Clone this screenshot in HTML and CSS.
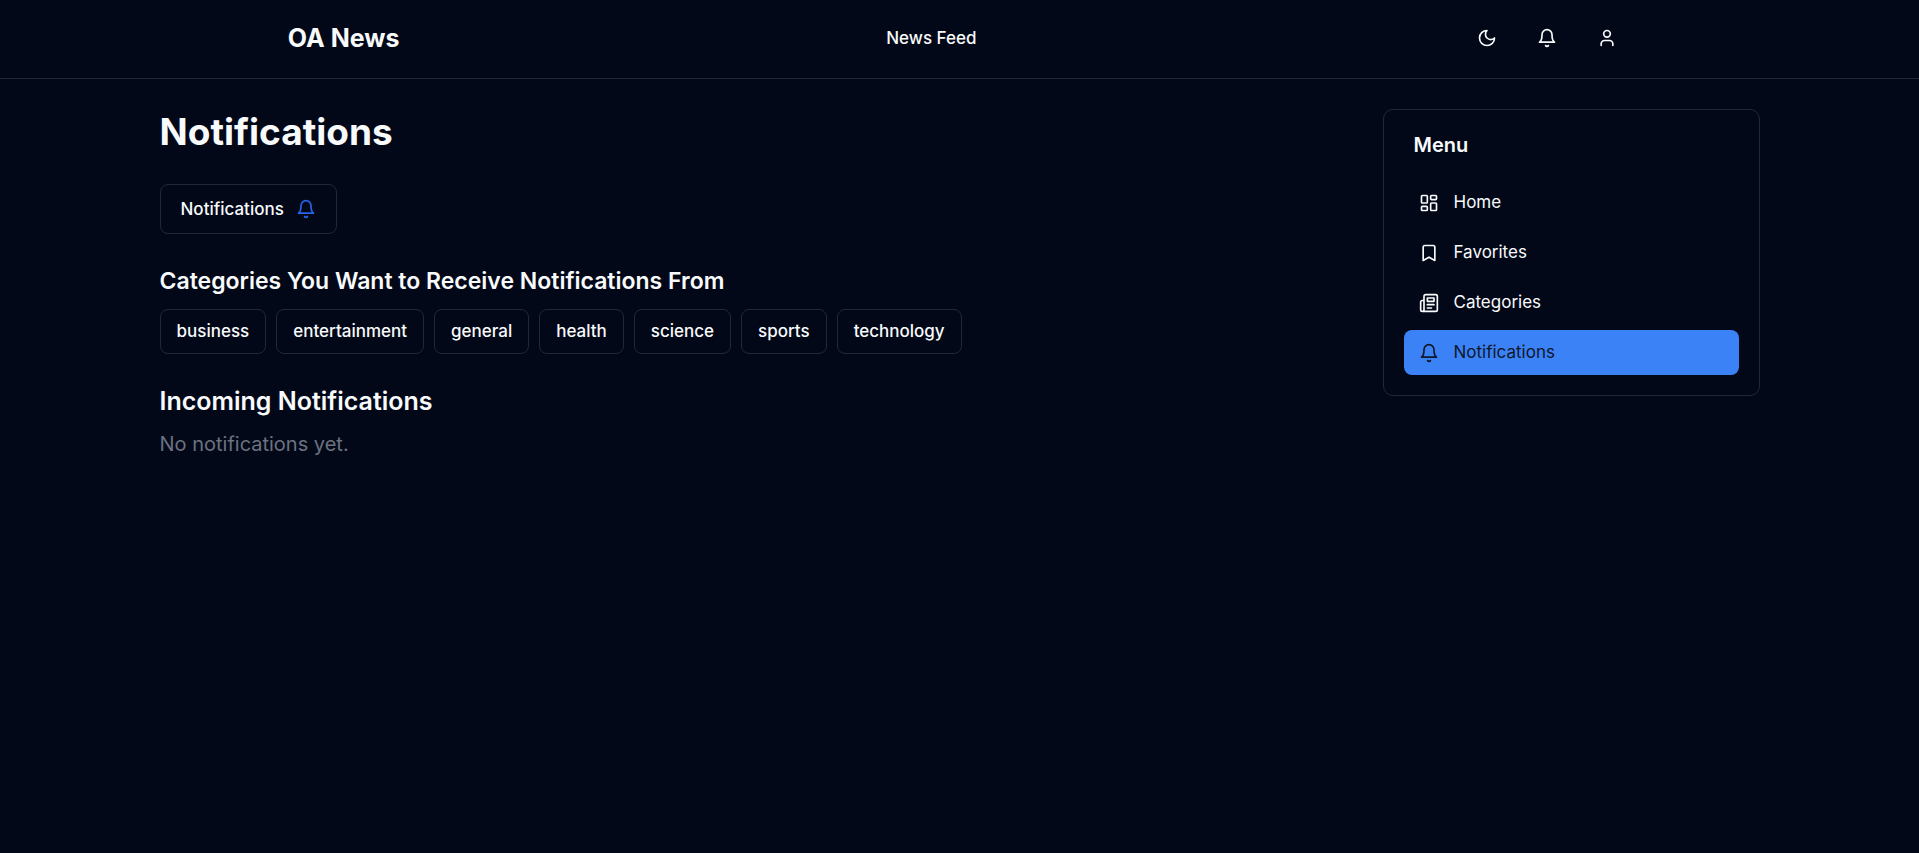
FILE: index.html
```html
<!DOCTYPE html>
<html lang="en">
<head>
<meta charset="utf-8">
<meta name="viewport" content="width=device-width, initial-scale=1">
<title>OA News</title>
<link rel="stylesheet" href="styles.css">
</head>
<body>
<svg class="sprite" aria-hidden="true">
  <symbol id="bell" viewBox="0 0 24 24"><path d="M6 8a6 6 0 0 1 12 0c0 7 3 9 3 9H3s3-2 3-9"/><path d="M10.3 21a1.94 1.94 0 0 0 3.4 0"/></symbol>
  <symbol id="moon" viewBox="0 0 24 24"><path d="M12 3a6 6 0 0 0 9 9 9 9 0 1 1-9-9Z"/></symbol>
  <symbol id="user" viewBox="0 0 24 24"><path d="M19 21v-2a4 4 0 0 0-4-4H9a4 4 0 0 0-4 4v2"/><circle cx="12" cy="7" r="4"/></symbol>
  <symbol id="dashboard" viewBox="0 0 24 24"><rect width="7" height="9" x="3" y="3" rx="1"/><rect width="7" height="5" x="14" y="3" rx="1"/><rect width="7" height="9" x="14" y="12" rx="1"/><rect width="7" height="5" x="3" y="16" rx="1"/></symbol>
  <symbol id="bookmark" viewBox="0 0 24 24"><path d="m19 21-7-4-7 4V5a2 2 0 0 1 2-2h10a2 2 0 0 1 2 2v16z"/></symbol>
  <symbol id="newspaper" viewBox="0 0 24 24"><path d="M4 22h16a2 2 0 0 0 2-2V4a2 2 0 0 0-2-2H8a2 2 0 0 0-2 2v16a2 2 0 0 1-2 2Zm0 0a2 2 0 0 1-2-2v-9c0-1.1.9-2 2-2h2"/><path d="M18 14h-8"/><path d="M15 18h-5"/><path d="M10 6h8v4h-8V6Z"/></symbol>
</svg>
<header class="header">
  <a class="brand" href="#">OA News</a>
  <nav><a class="nav-link" href="#">News Feed</a></nav>
  <div class="actions">
    <button class="icon-button" type="button" aria-label="Toggle theme"><svg class="icon"><use href="#moon"/></svg></button>
    <button class="icon-button" type="button" aria-label="Notifications"><svg class="icon"><use href="#bell"/></svg></button>
    <button class="icon-button" type="button" aria-label="Account"><svg class="icon"><use href="#user"/></svg></button>
  </div>
</header>
<div class="container">
  <main class="content">
    <h1 class="title">Notifications</h1>
    <button class="toggle" type="button">Notifications <svg class="icon icon-blue" aria-hidden="true"><use href="#bell"/></svg></button>
    <section class="section">
      <h2 class="subtitle">Categories You Want to Receive Notifications From</h2>
      <div class="chips">
        <button class="chip" type="button">business</button>
        <button class="chip" type="button">entertainment</button>
        <button class="chip" type="button">general</button>
        <button class="chip" type="button">health</button>
        <button class="chip" type="button">science</button>
        <button class="chip" type="button">sports</button>
        <button class="chip" type="button">technology</button>
      </div>
    </section>
    <section class="section">
      <h2 class="subtitle subtitle-large">Incoming Notifications</h2>
      <p class="empty">No notifications yet.</p>
    </section>
  </main>
  <aside class="card">
    <h2 class="card-title">Menu</h2>
    <nav class="menu">
      <a class="menu-item" href="#"><svg class="icon" aria-hidden="true"><use href="#dashboard"/></svg>Home</a>
      <a class="menu-item" href="#"><svg class="icon" aria-hidden="true"><use href="#bookmark"/></svg>Favorites</a>
      <a class="menu-item" href="#"><svg class="icon" aria-hidden="true"><use href="#newspaper"/></svg>Categories</a>
      <a class="menu-item active" href="#" aria-current="page"><svg class="icon" aria-hidden="true"><use href="#bell"/></svg>Notifications</a>
    </nav>
  </aside>
</div>
</body>
</html>
```
FILE: styles.css
```css
* { box-sizing: border-box; margin: 0; }
body { background: #020817; color: #f8fafc; font-family: Inter, sans-serif; font-size: 17px; line-height: 25px; }
a { color: inherit; text-decoration: none; }
button { font: inherit; font-weight: 500; color: inherit; background: none; border: 1px solid #1f2937; border-radius: 8px; cursor: pointer; }
.sprite { display: none; }
.icon { width: 20px; height: 20px; flex: none; fill: none; stroke: currentColor; stroke-width: 2; stroke-linecap: round; stroke-linejoin: round; }
.icon-blue { color: #2563eb; }
.header { display: flex; justify-content: space-between; align-items: center; padding: 14px 15% 16px; border-bottom: 1px solid #1e293b; }
.brand { font-size: 25px; font-weight: 700; line-height: 35px; }
.nav-link { font-weight: 500; }
.actions { display: flex; gap: 12px; }
.icon-button { display: flex; align-items: center; justify-content: center; width: 48px; height: 48px; border: 0; padding: 0; }
.container { display: flex; align-items: flex-start; gap: 30px; max-width: 1600px; margin: 0 auto; padding-top: 30px; }
.content { flex: 1; }
.title { font-size: 37px; font-weight: 700; line-height: 45px; }
.toggle { display: flex; align-items: center; gap: 12px; margin-top: 30px; padding: 0 20px; height: 50px; }
.section { margin-top: 30px; }
.subtitle { font-size: 23px; font-weight: 600; line-height: 35px; }
.subtitle-large { font-size: 25px; }
.chips { display: flex; flex-wrap: wrap; gap: 10px; margin-top: 10px; }
.chip { height: 45px; padding: 0 16px; }
.empty { margin-top: 10px; color: #6b7280; font-size: 20px; line-height: 30px; }
.card { flex: 0 0 377px; padding: 20px; border: 1px solid #1f2937; border-radius: 10px; }
.card-title { padding: 0 10px; font-size: 20px; font-weight: 600; line-height: 30px; }
.menu { display: flex; flex-direction: column; gap: 5px; margin-top: 20px; }
.menu-item { display: flex; align-items: center; gap: 15px; padding: 10px 15px; border-radius: 8px; }
.menu-item.active { background: #3b82f6; color: #0f172a; }
```
